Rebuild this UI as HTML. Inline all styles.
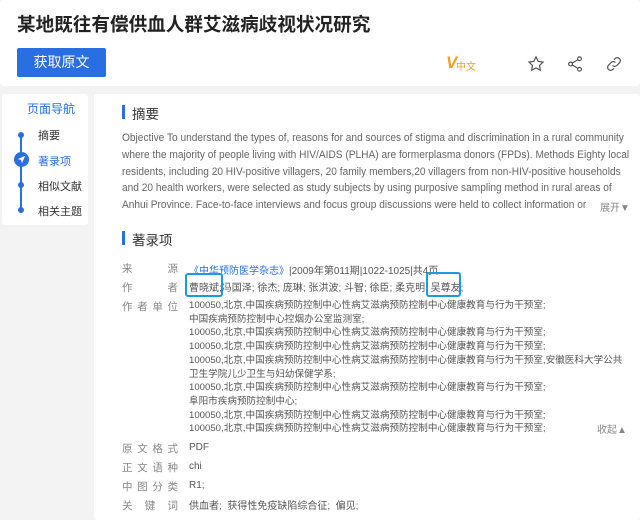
<!DOCTYPE html>
<html><head><meta charset="utf-8"><style>
*{margin:0;padding:0;box-sizing:border-box}
body{width:640px;height:520px;background:#f3f3f3;font-family:"Liberation Sans","Noto Sans CJK SC",sans-serif;position:relative;overflow:hidden;color:#333}
.a{position:absolute}
.p{background:#fff;position:absolute;border-radius:3px}
.t{font-size:18.6px;font-weight:bold;color:#222;left:17px;top:10px;white-space:nowrap}
.btn{left:17px;top:48px;width:89px;height:29px;background:#2a6ee3;color:#fff;font-size:14px;text-align:center;line-height:29px;border-radius:2px}
.nav{font-size:11px;color:#333;left:38px}
.ab{left:122px;top:130px;font-size:10.8px;color:#666;line-height:16.8px;white-space:nowrap;transform:scaleX(0.94);transform-origin:0 0}
.h{font-size:13.5px;color:#333}
.bar{width:3px;height:14px;background:#2a6ee3}
.lb{position:absolute;left:122px;width:56px;color:#888;font-size:10.5px;text-align-last:justify}
.bl{color:#2a6ee3}
.v{position:absolute;left:189px;font-size:10px;color:#555;white-space:nowrap}
.af{position:absolute;left:189px;top:299px;font-size:9.6px;color:#555;line-height:13.7px;white-space:nowrap}
</style></head><body>
<div class="p" style="left:0;top:0;width:640px;height:86px"></div>
<div class="a t">某地既往有偿供血人群艾滋病歧视状况研究</div>
<div class="a btn">获取原文</div>
<div class="a" style="left:446px;top:53px;font-size:17px;font-weight:bold;font-style:italic;color:#f0a020">V</div>
<div class="a" style="left:456px;top:58px;font-size:10px;color:#f0a020">中文</div>
<svg class="a" style="left:527px;top:55px" width="18" height="18" viewBox="0 0 24 24" fill="none" stroke="#555" stroke-width="1.6"><path d="M12 2.5l2.9 6 6.5.9-4.7 4.5 1.1 6.5L12 17.3l-5.8 3.1 1.1-6.5L2.6 9.4l6.5-.9z"/></svg>
<svg class="a" style="left:566px;top:55px" width="18" height="18" viewBox="0 0 24 24" fill="none" stroke="#555" stroke-width="1.6"><circle cx="18" cy="5" r="2.5"/><circle cx="6" cy="12" r="2.5"/><circle cx="18" cy="19" r="2.5"/><path d="M8.2 10.8l7.6-4.5M8.2 13.2l7.6 4.5"/></svg>
<svg class="a" style="left:605px;top:55px" width="18" height="18" viewBox="0 0 24 24" fill="none" stroke="#555" stroke-width="1.6"><path d="M10 14a4 4 0 0 0 5.7 0l3.6-3.6a4 4 0 0 0-5.7-5.7L12 6.3"/><path d="M14 10a4 4 0 0 0-5.7 0l-3.6 3.6a4 4 0 0 0 5.7 5.7l1.6-1.6"/></svg>

<div class="p" style="left:2px;top:94px;width:86px;height:131px"></div>
<div class="a" style="left:27px;top:100px;font-size:12px;color:#2a6ee3">页面导航</div>
<div class="a" style="left:20px;top:134px;width:2px;height:77px;background:#2a6ee3"></div>
<div class="a" style="left:18px;top:132px;width:6px;height:6px;border-radius:50%;background:#2a6ee3"></div>
<div class="a" style="left:18px;top:182px;width:6px;height:6px;border-radius:50%;background:#2a6ee3"></div>
<div class="a" style="left:18px;top:207px;width:6px;height:6px;border-radius:50%;background:#2a6ee3"></div>
<div class="a" style="left:14px;top:152px;width:15px;height:15px;border-radius:50%;background:#2a6ee3"></div>
<svg class="a" style="left:16px;top:154px" width="11" height="11" viewBox="0 0 12 12"><path d="M10 2L2 5.5l3.5 1L6.5 10z" fill="#fff"/></svg>
<div class="a nav" style="top:127px">摘要</div>
<div class="a nav" style="top:153px;color:#2a6ee3">著录项</div>
<div class="a nav" style="top:178px">相似文献</div>
<div class="a nav" style="top:203px">相关主题</div>

<div class="p" style="left:94px;top:94px;width:546px;height:426px"></div>
<div class="a bar" style="left:122px;top:105px"></div>
<div class="a h" style="left:132px;top:103px">摘要</div>
<div class="a ab">Objective To understand the types of, reasons for and sources of stigma and discrimination in a rural community<br>where the majority of people living with HIV/AIDS (PLHA) are formerplasma donors (FPDs). Methods Eighty local<br>residents, including 20 HIV-positive villagers, 20 family members,20 villagers from non-HIV-positive households<br>and 20 health workers, were selected as study subjects by using purposive sampling method in rural areas of<br>Anhui Province. Face-to-face interviews and focus group discussions were held to collect information or</div>
<div class="a" style="left:598px;top:199px;font-size:10px;color:#888;background:#fff;padding-left:2px">展开▼</div>

<div class="a bar" style="left:122px;top:231px"></div>
<div class="a h" style="left:132px;top:229px">著录项</div>
<div class="lb" style="top:261px">来源</div>
<div class="v" style="top:262px"><span class="bl">《中华预防医学杂志》</span>|2009年第011期|1022-1025|共4页</div>
<div class="lb" style="top:280px">作者</div>
<div class="v bl" style="top:279px">曹晓斌;冯国泽; 徐杰; 庞琳; 张洪波; 斗智; 徐臣; 柔克明; 吴尊友;</div>
<div class="a" style="left:185px;top:273px;width:38px;height:24px;border:2px solid #1a9be0;border-radius:3px"></div>
<div class="a" style="left:426px;top:272px;width:35px;height:25px;border:2px solid #1a9be0;border-radius:3px"></div>
<div class="lb" style="top:299px">作者单位</div>
<div class="af">100050,北京,中国疾病预防控制中心性病艾滋病预防控制中心健康教育与行为干预室;<br>中国疾病预防控制中心控烟办公室监测室;<br>100050,北京,中国疾病预防控制中心性病艾滋病预防控制中心健康教育与行为干预室;<br>100050,北京,中国疾病预防控制中心性病艾滋病预防控制中心健康教育与行为干预室;<br>100050,北京,中国疾病预防控制中心性病艾滋病预防控制中心健康教育与行为干预室,安徽医科大学公共<br>卫生学院儿少卫生与妇幼保健学系;<br>100050,北京,中国疾病预防控制中心性病艾滋病预防控制中心健康教育与行为干预室;<br>阜阳市疾病预防控制中心;<br>100050,北京,中国疾病预防控制中心性病艾滋病预防控制中心健康教育与行为干预室;<br>100050,北京,中国疾病预防控制中心性病艾滋病预防控制中心健康教育与行为干预室;</div>
<div class="a" style="left:597px;top:421px;font-size:10px;color:#888">收起▲</div>
<div class="lb" style="top:441px">原文格式</div><div class="v" style="top:442px">PDF</div>
<div class="lb" style="top:460px">正文语种</div><div class="v" style="top:461px">chi</div>
<div class="lb" style="top:479px">中图分类</div><div class="v" style="top:480px">R1;</div>
<div class="lb" style="top:498px">关键词</div><div class="v bl" style="top:497px">供血者; &nbsp;获得性免疫缺陷综合征; &nbsp;偏见;</div>
</body></html>
